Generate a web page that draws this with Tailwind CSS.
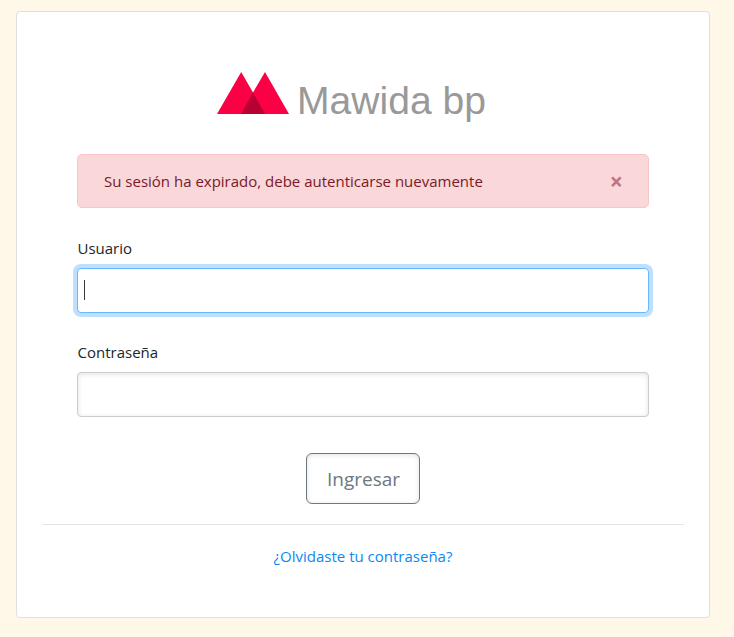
<!DOCTYPE html>
<html lang="es">
<head>
<meta charset="utf-8">
<title>Mawida bp</title>
<script src="https://cdn.jsdelivr.net/npm/@tailwindcss/browser@4"></script>
</head>
<body class="h-[637px] overflow-hidden bg-[#fff7e7] pt-[11px] pl-4 font-['Open_Sans',sans-serif] text-[15px] leading-[22px] text-[#212529]">
<main class="flex h-[607px] w-[694px] flex-col rounded-[4px] border border-[#dfdfdf] bg-white px-[25px]">
  <form class="flex flex-col px-[35px]">
    <svg class="mt-[54px] ml-[128px] h-[64px] w-[290px]" viewBox="205 66 290 64" role="img" aria-label="Mawida bp">
      <path d="M217 114 241.2 72 253 92.500 265 72 289 114Z" fill="#fb0045"/>
      <path d="M241 114 253 92.500 265 114Z" fill="#b90035"/>
      <text x="297" y="114" font-family="Liberation Sans, Arial, sans-serif" font-size="39.100" fill="#999">Mawida bp</text>
    </svg>
    <div class="mt-6 flex h-[54px] items-center justify-between rounded-[5px] border border-[#f9c4ca] bg-[#fad7d9] pr-[25px] pl-[26px] text-[#79192a]">
      <span>Su sesión ha expirado, debe autenticarse nuevamente</span>
      <button type="button" class="text-[23px] leading-none font-bold text-[#bd7680]">×</button>
    </div>
    <label class="mt-[29px] pl-[0.5px]" for="u">Usuario</label>
    <div id="u" class="mt-[9px] flex h-[45px] items-start rounded-[4px] border border-[#66bafb] bg-white pt-[11px] pl-[6px] shadow-[0_0_0_4px_#bfdfff]">
      <span class="h-5 w-px bg-[#343a40]"></span>
    </div>
    <label class="mt-[28px] pl-[0.5px]" for="p">Contraseña</label>
    <input id="p" type="password" class="mt-[9px] h-[45px] rounded-[4px] border border-[#ccc] bg-white px-2 shadow-[inset_0_1px_5px_rgba(0,0,0,0.12)] outline-none">
    <button type="button" class="mt-9 h-[51px] w-[114px] self-center rounded-[6px] border border-[#6c7780] bg-white pl-px text-[19px] text-[#6c7780] shadow-[inset_0_1px_5px_rgba(0,0,0,0.12)]">Ingresar</button>
  </form>
  <hr class="mt-5 border-[#e5e5e5]">
  <a href="#" class="mt-5 self-center text-[#0d87f3]">¿Olvidaste tu contraseña?</a>
</main>
</body>
</html>
